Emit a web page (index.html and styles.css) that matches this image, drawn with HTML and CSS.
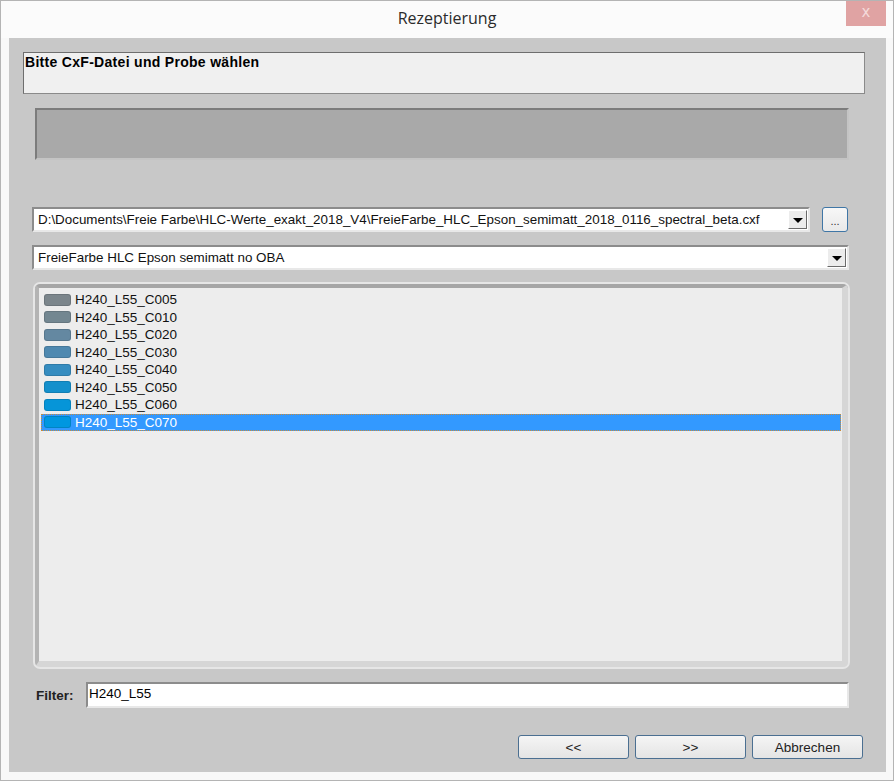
FILE: index.html
```html
<!DOCTYPE html>
<html lang="de">
<head>
  <meta charset="UTF-8" />
  <title>Rezeptierung</title>
  <link rel="stylesheet" href="styles.css">
</head>
<body>
  <div class="window">
    <div class="titlebar">
      <span class="title">Rezeptierung</span>
      <span class="close">x</span>
    </div>

    <div class="client">
      <div class="message">Bitte CxF-Datei und Probe wählen</div>
      <div class="panel"></div>

      <div class="path-row">
        <div class="combo">
          <span class="combo-text">D:\Documents\Freie Farbe\HLC-Werte_exakt_2018_V4\FreieFarbe_HLC_Epson_semimatt_2018_0116_spectral_beta.cxf</span>
          <span class="drop"></span>
        </div>
        <button class="browse">...</button>
      </div>

      <div class="combo combo-wide">
        <span class="combo-text">FreieFarbe HLC Epson semimatt no OBA</span>
        <span class="drop"></span>
      </div>

      <div class="list-frame">
        <div class="list">
          <div class="item"><span class="swatch" style="background:#7c868c"></span>H240_L55_C005</div>
          <div class="item"><span class="swatch" style="background:#738791"></span>H240_L55_C010</div>
          <div class="item"><span class="swatch" style="background:#6488a1"></span>H240_L55_C020</div>
          <div class="item"><span class="swatch" style="background:#4f89b0"></span>H240_L55_C030</div>
          <div class="item"><span class="swatch" style="background:#368dc0"></span>H240_L55_C040</div>
          <div class="item"><span class="swatch" style="background:#1490cc"></span>H240_L55_C050</div>
          <div class="item"><span class="swatch" style="background:#0695d8"></span>H240_L55_C060</div>
          <div class="item selected"><span class="swatch" style="background:#0097e0"></span>H240_L55_C070</div>
        </div>
      </div>

      <div class="filter-row">
        <label class="filter-label">Filter:</label>
        <div class="filter-input">H240_L55</div>
      </div>

      <div class="buttons">
        <button class="btn">&lt;&lt;</button>
        <button class="btn">&gt;&gt;</button>
        <button class="btn">Abbrechen</button>
      </div>
    </div>
  </div>
</body>
</html>
```

FILE: styles.css
```css
* {
  box-sizing: border-box;
}

body {
  margin: 0;
  background: #ffffff;
  font-family: "Liberation Sans", Arial, sans-serif;
  font-size: 13px;
  color: #000;
}

.window {
  width: 894px;
  height: 781px;
  border: 1px solid #b4b4b4;
  background: #f8f8f8;
}

.titlebar {
  height: 37px;
  display: flex;
  justify-content: center;
  align-items: center;
  position: relative;
  background: #fbfbfb;
}

.title {
  font-family: "Open Sans", sans-serif;
  font-size: 16px;
  color: #2b2b2b;
  margin-top: -3px;
}

.close {
  position: absolute;
  top: 0;
  right: 7px;
  width: 40px;
  height: 25px;
  background: #e0a3a3;
  color: #f4dada;
  font-family: "DejaVu Sans", sans-serif;
  font-size: 15px;
  line-height: 22px;
  text-align: center;
}

.client {
  background: #c8c8c8;
  margin: 0 7px 0 8px;
  height: 734px;
  display: flex;
  flex-direction: column;
}

.message {
  margin: 14px 21px 0 14px;
  height: 42px;
  background: #f0f0f0;
  border: 1px solid #6e6e6e;
  border-right-color: #8a8a8a;
  border-bottom-color: #8a8a8a;
  padding: 1px 1px;
  font-weight: bold;
  font-size: 14px;
  letter-spacing: 0.3px;
}

.panel {
  margin: 14px 37px 0 26px;
  height: 52px;
  background: #a9a9a9;
  border: 2px solid #7c7c7c;
  border-right-color: #c4c4c4;
  border-bottom-color: #c4c4c4;
}

.path-row {
  margin: 47px 38px 0 23px;
  display: flex;
  gap: 12px;
  align-items: flex-start;
}

.combo {
  flex: 1;
  height: 25px;
  background: #fff;
  border: 2px solid #8c8c8c;
  border-right-color: #e8e8e8;
  border-bottom-color: #e8e8e8;
  display: flex;
  align-items: center;
  padding-left: 4px;
  overflow: hidden;
  white-space: nowrap;
}

.combo-text {
  flex: 1;
  overflow: hidden;
  font-size: 13.4px;
  color: #111;
}

.combo-wide {
  flex: none;
  margin: 13px 37px 0 23px;
}

.drop {
  width: 19px;
  height: 19px;
  margin-right: 1px;
  background: #ececec;
  border: 1px solid #fff;
  border-right-color: #6a6a6a;
  border-bottom-color: #6a6a6a;
  position: relative;
  flex: none;
}

.drop::after {
  content: "";
  position: absolute;
  left: 4px;
  top: 7px;
  border-left: 5px solid transparent;
  border-right: 5px solid transparent;
  border-top: 5px solid #000;
}

.browse {
  width: 26px;
  height: 25px;
  padding: 0;
  font-family: "Liberation Sans", sans-serif;
  font-size: 11px;
  line-height: 26px;
  color: #333;
  background: linear-gradient(#f7f7f7, #e9e9e9);
  border: 1px solid #3f76a6;
  border-radius: 3px;
}

.list-frame {
  margin: 12px 36px 0 24px;
  height: 387px;
  border: 2px solid #e6e6e6;
  border-radius: 7px;
  overflow: hidden;
}

.list {
  height: 100%;
  background: #ededed;
  border-style: solid;
  border-width: 4px 6px 6px 4px;
  border-color: #a6a6a6 #d6d6d6 #d6d6d6 #b4b4b4;
  padding: 3px 1px 0 2px;
}

.item {
  height: 17.5px;
  line-height: 17.5px;
  display: flex;
  align-items: center;
  white-space: nowrap;
  font-size: 13.5px;
  color: #111;
}

.swatch {
  width: 27px;
  height: 12px;
  border: 1px solid rgba(0, 0, 0, 0.12);
  border-radius: 3px;
  margin: 0 4px 0 3px;
}

.item.selected {
  background: #3399ff;
  color: #fff;
  outline: 1px dotted #c88a3a;
  outline-offset: -1px;
}

.filter-row {
  margin: 13px 37px 0 27px;
  display: flex;
  align-items: center;
}

.filter-label {
  width: 50px;
  font-weight: bold;
  font-size: 13.5px;
  color: #222;
}

.filter-input {
  flex: 1;
  height: 26px;
  background: #fff;
  border: 2px solid #8c8c8c;
  border-right-color: #e8e8e8;
  border-bottom-color: #e8e8e8;
  padding: 2px 1px;
  font-size: 13.5px;
}

.buttons {
  margin: 27px 23px 0 0;
  display: flex;
  justify-content: flex-end;
  gap: 6px;
}

.btn {
  width: 111px;
  height: 24px;
  padding: 0;
  font-family: "Liberation Sans", sans-serif;
  font-size: 13.5px;
  color: #222;
  background: linear-gradient(#f5f5f5, #e4e4e4);
  border: 1px solid #4b6f91;
  border-radius: 3px;
}
```
